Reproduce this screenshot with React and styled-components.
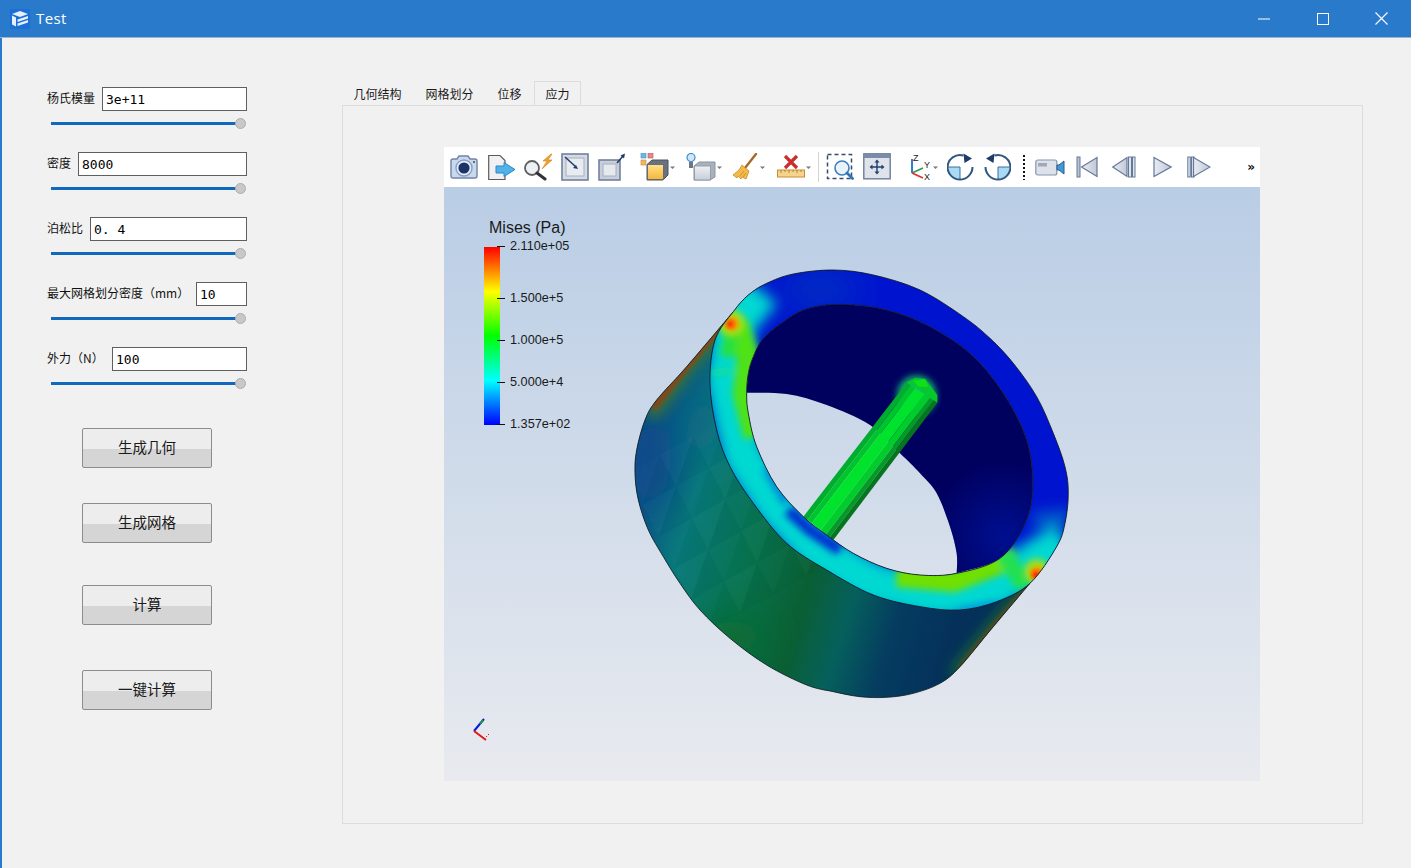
import React from "react";
import styled, { createGlobalStyle } from "styled-components";

const GlobalStyle = createGlobalStyle`
  html, body {
    margin: 0;
    padding: 0;
    background: #f1f1f1;
  }
  * {
    box-sizing: border-box;
  }
`;

const CJK = `"Noto Sans CJK SC", "Noto Sans", sans-serif`;

const Window = styled.div`
  width: 1411px;
  height: 868px;
  overflow: hidden;
  background: #f1f1f1;
  font-family: ${CJK};
`;

const TitleBar = styled.div`
  display: flex;
  align-items: center;
  height: 38px;
  padding-left: 10px;
  background: #2a7acc;
  border-bottom: 1px solid #9fb4c9;
  color: #fff;
`;

const TitleText = styled.span`
  margin: 0 0 2px 6px;
  font-family: "Open Sans", sans-serif;
  font-size: 15px;
  letter-spacing: 0.4px;
`;

const WindowButtons = styled.div`
  display: flex;
  margin-left: auto;
`;

const WindowButton = styled.div`
  display: flex;
  align-items: center;
  justify-content: center;
  width: 58.67px;
  height: 37px;
`;

const Body = styled.div`
  display: flex;
  height: 830px;
  padding: 43px 0 0 45px;
  border-left: 2px solid #2a7acc;
`;

const SidePanel = styled.div`
  width: 295px;
  padding-top: 6px;
  flex: none;
`;

const ParamGroup = styled.div`
  width: 200px;
  height: 65px;
`;

const ParamRow = styled.div`
  display: flex;
  align-items: center;
  justify-content: space-between;
  height: 24px;
`;

const ParamLabel = styled.label`
  padding-bottom: 2px;
  font-size: 12px;
  line-height: 22px;
  color: #111;
  white-space: pre;
`;

const ParamInput = styled.input`
  width: ${({ $width }) => $width}px;
  height: 24px;
  padding: 0 0 0 3px;
  background: #fff;
  border: 1px solid #5f5f5f;
  border-radius: 0;
  outline: none;
  font-family: "DejaVu Sans Mono", monospace;
  font-size: 13px;
  color: #000;
`;

const Slider = styled.div`
  position: relative;
  width: 189px;
  height: 3px;
  margin: 11px 0 0 4px;
  background: #1169bd;
`;

const SliderThumb = styled.div`
  position: absolute;
  top: -4px;
  right: -6px;
  width: 11px;
  height: 11px;
  border-radius: 50%;
  background: #c8c8c8;
  border: 1px solid #adadad;
`;

const ActionButton = styled.button`
  display: block;
  width: 130px;
  height: 40px;
  margin: ${({ $top }) => $top}px 0 0 35px;
  padding: 0 0 3px;
  background: linear-gradient(#ededed 52%, #d5d5d5 52%);
  border: 1px solid #8c8c8c;
  border-radius: 2px;
  font-family: ${CJK};
  font-size: 14.5px;
  color: #1a1a1a;
`;

const MainArea = styled.div`
  display: flex;
  flex-direction: column;
  width: 1021px;
`;

const TabBar = styled.div`
  display: flex;
  gap: 1px;
  height: 25px;
  margin-bottom: -1px;
`;

const Tab = styled.div`
  display: flex;
  align-items: center;
  justify-content: center;
  height: 25px;
  padding: 0 10.5px 1px;
  border: 1px solid ${({ $active }) => ($active ? "#dcdcdc" : "transparent")};
  border-bottom: none;
  font-size: 12px;
  color: #1a1a1a;
`;

const Pane = styled.div`
  height: 719px;
  padding: 41px 0 0 101px;
  border: 1px solid #dcdcdc;
`;

const Viewer = styled.div`
  display: flex;
  flex-direction: column;
  width: 816px;
  height: 634px;
`;

const Toolbar = styled.div`
  display: flex;
  align-items: center;
  flex: none;
  height: 40px;
  padding: 0 5px 0 6px;
  background: #fff;
`;

const Tool = styled.div`
  display: flex;
  flex: none;
  margin-left: ${({ $gap }) => $gap}px;

  svg {
    display: block;
  }
`;

const ToolDivider = styled.div`
  flex: none;
  width: 1px;
  height: 30px;
  margin: 0 7px 0 6px;
  background: #d4d4d4;
`;

const ToolDots = styled.div`
  flex: none;
  width: 2px;
  height: 25px;
  margin: 0 10px 0 12px;
  background: repeating-linear-gradient(#111 0 2px, transparent 2px 4px);
`;

const MoreLabel = styled.span`
  margin-left: auto;
  font-family: "DejaVu Sans", sans-serif;
  font-size: 12px;
  font-weight: 700;
  color: #111;
`;

const Canvas = styled.div`
  position: relative;
  flex: 1;
  background: linear-gradient(#b9cde5, #e8eaef);

  > svg {
    display: block;
  }
`;

const Legend = styled.div`
  position: absolute;
  top: 30px;
  left: 40px;
  font-family: "Liberation Sans", Arial, sans-serif;
  color: #1a1a1a;
`;

const LegendTitle = styled.div`
  margin-left: 5px;
  padding-top: 1px;
  font-size: 16px;
  line-height: 20px;
`;

const LegendScale = styled.div`
  display: flex;
  margin-top: 9px;
`;

const ColorBar = styled.div`
  width: 16px;
  height: 178px;
  background: linear-gradient(
    #ff0000 0%,
    #ffff00 25%,
    #00ff00 50%,
    #00ffff 75%,
    #0000ff 100%
  );
`;

const LegendTicks = styled.div`
  position: relative;
  width: 90px;
`;

const Tick = styled.div`
  position: absolute;
  top: ${({ $y }) => $y}px;
  left: -3px;
  display: flex;
  align-items: center;
  height: 14px;
  font-size: 12.7px;
  white-space: nowrap;

  &::before {
    content: "";
    width: 8px;
    height: 1px;
    margin-right: 5px;
    background: #111;
  }
`;

const Camera = () => (
  <svg width="28" height="28" viewBox="0 0 28 28">
    <path d="M1 8q0-2 2-2h4l2-3h9l2 3h5q2 0 2 2v15q0 2-2 2H3q-2 0-2-2z" fill="#c9d8ec" stroke="#6f84a8" strokeWidth="1.4" />
    <circle cx="14" cy="15" r="8" fill="#e8eef7" stroke="#86a0c6" strokeWidth="1.4" />
    <circle cx="14" cy="15" r="5.6" fill="#1c3368" />
    <circle cx="24" cy="9" r="1" fill="#445" />
  </svg>
);

const SaveData = () => (
  <svg width="28" height="28" viewBox="0 0 28 28">
    <path d="M0.7 2.5H12l5 5v19H0.7z" fill="#f1f1f3" stroke="#5a5a5f" strokeWidth="1.2" />
    <path d="M8 13h8V9.5l11 7-11 7V20H8z" fill="#4fb2e8" stroke="#2f86c4" strokeWidth="1" />
  </svg>
);

const RenderZoom = () => (
  <svg width="28" height="28" viewBox="0 0 28 28">
    <circle cx="8" cy="15" r="7" fill="#eef1f4" stroke="#5c5f63" strokeWidth="1.8" />
    <path d="M13 20l8 6" stroke="#333" strokeWidth="3" strokeLinecap="round" />
    <path d="M27 1l-8 7h4l-5 8 10-9h-4l4-6z" fill="#f0a030" stroke="#d9801a" strokeWidth="0.6" />
  </svg>
);

const BoxIn = () => (
  <svg width="28" height="28" viewBox="0 0 28 28">
    <rect x="1" y="1" width="26" height="26" fill="#d5dae3" stroke="#71839f" strokeWidth="1.6" />
    <rect x="5" y="5" width="18" height="18" fill="#e8ebef" stroke="#a6b0bf" strokeWidth="1" />
    <path d="M4 4l11 10" stroke="#1f3a6e" strokeWidth="1.5" />
    <path d="M17 16l-5-1 3-3z" fill="#1f3a6e" />
  </svg>
);

const BoxOut = () => (
  <svg width="28" height="28" viewBox="0 0 28 28">
    <rect x="1" y="7" width="21" height="20" fill="#c9ced8" stroke="#71839f" strokeWidth="1.6" />
    <rect x="5" y="11" width="13" height="12" fill="#e6e9ee" stroke="#a6b0bf" strokeWidth="1" />
    <path d="M19 10l6-7" stroke="#1f3a6e" strokeWidth="1.5" />
    <path d="M27 0.5l-1 5-3.500-3z" fill="#1f3a6e" />
  </svg>
);

const Caret = ({ x }) => <path d={`M${x} 13.500h5l-2.500 2.500z`} fill="#777" />;

const ColorCube = () => (
  <svg width="36" height="28" viewBox="0 0 36 28">
    <defs>
      <linearGradient id="cubeFront" x1="0" y1="0" x2="0" y2="1">
        <stop offset="0" stopColor="#ffe28a" />
        <stop offset="1" stopColor="#f7b53a" />
      </linearGradient>
    </defs>
    <rect x="1" y="0" width="5" height="5" fill="#6db6e8" stroke="#4a8dc0" strokeWidth="0.6" />
    <rect x="8" y="0" width="5" height="5" fill="#e08a8a" stroke="#b45a5a" strokeWidth="0.6" />
    <rect x="1" y="7" width="5" height="5" fill="#f3b562" stroke="#cc8a3a" strokeWidth="0.6" />
    <path d="M7 11.500l5-4.500h16v15l-5 5H7z" fill="#6a7280" stroke="#4a5260" strokeWidth="1" />
    <rect x="7.500" y="11.500" width="16" height="15" fill="url(#cubeFront)" stroke="#5a6270" strokeWidth="0.8" />
    <Caret x={30} />
  </svg>
);

const LightCube = () => (
  <svg width="37" height="28" viewBox="0 0 37 28">
    <defs>
      <linearGradient id="greyFront" x1="0" y1="0" x2="0" y2="1">
        <stop offset="0" stopColor="#eef1f4" />
        <stop offset="1" stopColor="#c6ced8" />
      </linearGradient>
    </defs>
    <path d="M8 13l5-4h16v15l-5 3H8z" fill="#a9b1bd" stroke="#8b94a1" strokeWidth="1" />
    <rect x="8.500" y="13" width="16" height="14" fill="url(#greyFront)" stroke="#8b94a1" strokeWidth="0.8" />
    <circle cx="5" cy="4.500" r="4" fill="#cfe7fa" stroke="#3f8ecb" strokeWidth="1.2" />
    <rect x="3" y="9" width="4" height="6" fill="#6d7685" />
    <Caret x={31} />
  </svg>
);

const Broom = () => (
  <svg width="35" height="28" viewBox="0 0 35 28">
    <path d="M24 1L13 15" stroke="#a8692b" strokeWidth="2.400" strokeLinecap="round" />
    <path d="M10 12l7 6-3 8-4-2-1 2-3-3-1 2-4-3 6-5z" fill="#f2b94b" stroke="#c98d24" strokeWidth="0.8" />
    <path d="M12 18l-4 5M14 20l-3 4" stroke="#c98d24" strokeWidth="0.8" />
    <Caret x={28} />
  </svg>
);

const ClearRuler = () => (
  <svg width="35" height="28" viewBox="0 0 35 28">
    <path d="M8 3l12 12M20 3L8 15" stroke="#c9302c" strokeWidth="3.200" />
    <rect x="0.500" y="17" width="27" height="7" fill="#f4d58a" stroke="#c98b3c" strokeWidth="1" />
    <path d="M4 17v3M8 17v2M12 17v3M16 17v2M20 17v3M24 17v2" stroke="#a9702c" strokeWidth="0.8" />
    <Caret x={29} />
  </svg>
);

const DashedZoom = () => (
  <svg width="28" height="28" viewBox="0 0 28 28">
    <rect x="1.500" y="1.500" width="24" height="24" fill="none" stroke="#36496e" strokeWidth="1.500" strokeDasharray="4 3" />
    <circle cx="16" cy="15" r="7" fill="#eaf2fa" stroke="#3f7fba" strokeWidth="1.600" />
    <path d="M21 20l5.500 5.500" stroke="#2c77b8" strokeWidth="2.800" strokeLinecap="round" />
  </svg>
);

const ResetCamera = () => (
  <svg width="28" height="28" viewBox="0 0 28 28">
    <rect x="0.800" y="0.800" width="26.400" height="25" fill="#dfe4ec" stroke="#6b7d99" strokeWidth="1.400" />
    <rect x="1" y="1" width="26" height="4" fill="#7c8ca8" />
    <path d="M14 8v12M8 14h12" stroke="#23406e" strokeWidth="1.400" />
    <path d="M14 6.500l-2.500 3h5zM14 21.500l-2.500-3h5zM6.500 14l3-2.500v5zM21.500 14l-3-2.500v5z" fill="#23406e" />
  </svg>
);

const Axes = () => (
  <svg width="32" height="28" viewBox="0 0 32 28">
    <path d="M4 20V6" stroke="#1f6fd0" strokeWidth="1.800" />
    <path d="M4 20l11-5" stroke="#2f9e4f" strokeWidth="1.800" />
    <path d="M4 20l11 5" stroke="#e03131" strokeWidth="1.800" />
    <text x="5" y="8" fontSize="9" fontFamily="Liberation Sans, sans-serif" fill="#222">Z</text>
    <text x="16" y="15" fontSize="9" fontFamily="Liberation Sans, sans-serif" fill="#222">Y</text>
    <text x="16" y="27" fontSize="9" fontFamily="Liberation Sans, sans-serif" fill="#222">X</text>
    <Caret x={25} />
  </svg>
);

const Rotate = ({ flip }) => (
  <svg width="27" height="28" viewBox="0 0 27 28">
    <g transform={flip ? "matrix(-1 0 0 1 27 0)" : undefined}>
      <path d="M13 14H1a12.500 12.500 0 0 0 12 12.500z" fill="#a9d9f3" />
      <path d="M1 14H13V26.500" fill="none" stroke="#3a6f9f" strokeWidth="1" />
      <path d="M25.500 14a12.500 12.500 0 0 1-25 0 12.500 12.500 0 0 1 16-11.500" fill="none" stroke="#33567f" strokeWidth="2" />
      <path d="M16.500 0.500L25 5.500 17.500 10z" fill="#1d3b6b" />
    </g>
  </svg>
);

const VideoCamera = () => (
  <svg width="30" height="28" viewBox="0 0 30 28">
    <rect x="0.800" y="7" width="21" height="15" rx="2" fill="#dde2ea" stroke="#8595ad" strokeWidth="1.200" />
    <rect x="3" y="10" width="9" height="3.500" fill="#9fa9b9" />
    <path d="M22 12h2l5-4v13l-5-4h-2z" fill="#3f9ad6" stroke="#2e5b8f" strokeWidth="1" />
  </svg>
);

const PlayerGradient = ({ id }) => (
  <defs>
    <linearGradient id={id} x1="0" y1="0" x2="1" y2="0">
      <stop offset="0" stopColor="#e8ecf3" />
      <stop offset="1" stopColor="#c2c9d5" />
    </linearGradient>
  </defs>
);

const FirstFrame = () => (
  <svg width="22" height="28" viewBox="0 0 22 28">
    <PlayerGradient id="firstGrad" />
    <rect x="1" y="4" width="3" height="20" fill="#bac3d1" stroke="#65789a" strokeWidth="1" />
    <path d="M5.500 14L21 4.500v19z" fill="url(#firstGrad)" stroke="#65789a" strokeWidth="1.200" />
  </svg>
);

const PrevFrame = () => (
  <svg width="24" height="28" viewBox="0 0 24 28">
    <PlayerGradient id="prevGrad" />
    <path d="M0.800 14L15 4.500v19z" fill="url(#prevGrad)" stroke="#65789a" strokeWidth="1.200" />
    <rect x="16.500" y="4" width="3" height="20" fill="#dfe4ec" stroke="#65789a" strokeWidth="1" />
    <rect x="20.500" y="4" width="2.500" height="20" fill="#dfe4ec" stroke="#65789a" strokeWidth="1" />
  </svg>
);

const PlayFrame = () => (
  <svg width="19" height="28" viewBox="0 0 19 28">
    <PlayerGradient id="playGrad" />
    <path d="M1 4.500L18 14 1 23.500z" fill="url(#playGrad)" stroke="#65789a" strokeWidth="1.200" />
  </svg>
);

const NextFrame = () => (
  <svg width="24" height="28" viewBox="0 0 24 28">
    <PlayerGradient id="nextGrad" />
    <rect x="0.800" y="4" width="2.500" height="20" fill="#dfe4ec" stroke="#65789a" strokeWidth="1" />
    <rect x="4.500" y="4" width="2.500" height="20" fill="#dfe4ec" stroke="#65789a" strokeWidth="1" />
    <path d="M6.500 4.500L23 14 6.500 23.500z" fill="url(#nextGrad)" stroke="#65789a" strokeWidth="1.200" />
  </svg>
);

// Catmull-Rom through the traced outline, so the ring edges stay round
const curve = (p, wrap) => {
  const n = p.length;
  const at = (i) => (wrap ? p[(i + n) % n] : p[Math.max(0, Math.min(n - 1, i))]);
  let d = "";
  const last = wrap ? n : n - 1;
  for (let i = 0; i < last; i++) {
    const [p0, p1, p2, p3] = [at(i - 1), at(i), at(i + 1), at(i + 2)];
    const c1x = p1[0] + (p2[0] - p0[0]) / 6;
    const c1y = p1[1] + (p2[1] - p0[1]) / 6;
    const c2x = p2[0] - (p3[0] - p1[0]) / 6;
    const c2y = p2[1] - (p3[1] - p1[1]) / 6;
    d += `C${c1x} ${c1y} ${c2x} ${c2y} ${p2[0]} ${p2[1]}`;
  }
  return d;
};
const closed = (p) => `M${p[0].join(" ")}${curve(p, true)}Z`;
const open = (p) => `M${p[0].join(" ")}${curve(p, false)}`;
const line = (list) => "M" + list.map((p) => p.join(" ")).join("L");

const OUTER = [
  [340, 155], [385, 105], [440, 70], [520, 42], [640, 30], [760, 45], [900, 90], [1030, 170], [1110, 235], [1180, 310],
  [1250, 410], [1300, 520], [1335, 620], [1345, 700], [1335, 790], [1310, 860], [1230, 970], [1130, 1025], [1020, 1050],
  [900, 1040], [760, 1005], [620, 930], [500, 850], [400, 730], [330, 620], [290, 510], [270, 370], [285, 240],
];

const HOLE = [
  [380, 398], [385, 340], [400, 290], [430, 235], [490, 185], [550, 150], [620, 135], [700, 135], [800, 150], [920, 195],
  [1050, 280], [1150, 400], [1220, 540], [1238, 680], [1215, 790], [1140, 895], [1010, 940], [900, 945], [800, 925],
  [700, 880], [620, 825], [550, 770], [470, 680], [410, 560], [385, 460],
];

const BACK_CUT = [
  [1010, 940], [1010, 880], [990, 800], [950, 700], [900, 640], [840, 580], [750, 495], [620, 435], [500, 402], [380, 398],
];

const WALL_EDGE = [
  [340, 155], [200, 320], [110, 420], [75, 480], [50, 570], [45, 640], [55, 720], [85, 810], [130, 890],
  [180, 970], [240, 1050], [330, 1135], [440, 1215], [560, 1275], [640, 1295], [720, 1310], [800, 1312], [880, 1300],
  [960, 1270], [1020, 1220], [1120, 1100], [1230, 970],
];

const WALL = `${open(WALL_EDGE)}L1100 1030L900 1040L600 900L400 730L290 510L270 370Z`;
const DARK_INSIDE = `M380 398${curve(HOLE.slice(0, 17), false)}${curve(BACK_CUT, false)}Z`;

// Mesh facets on the outer wall: alternating light and dark triangles on a skewed lattice
const FACETS = [];
for (let i = 0; i < 5; i++) {
  for (let j = 0; j < 5; j++) {
    const x = 20 + i * 100 + j * 48;
    const y = 640 - i * 56 + j * 95;
    const a = [x, y];
    const b = [x + 100, y - 56];
    const c = [x + 48, y + 95];
    const e = [x + 148, y + 39];
    FACETS.push({ d: line([a, b, c]) + "Z", fill: "#fff", o: (i + j) % 2 ? 0.024 : 0.01 });
    FACETS.push({ d: line([b, e, c]) + "Z", fill: "#000", o: (i + j) % 2 ? 0.028 : 0.015 });
  }
}

// Rod strips, from the lit edge to the shaded edge
const ROD_STRIPS = [
  { from: 0, to: 0.14, fill: "#00ad2e" },
  { from: 0.14, to: 0.28, fill: "#00c42e" },
  { from: 0.28, to: 0.58, fill: "#00e32c" },
  { from: 0.58, to: 0.76, fill: "#00cd2c" },
  { from: 0.76, to: 0.88, fill: "#049a28" },
  { from: 0.88, to: 1, fill: "#067520" },
];
const mix = (a, b, t) => [a[0] + (b[0] - a[0]) * t, a[1] + (b[1] - a[1]) * t];
const rodStrip = (from, to) => {
  const lowA = [550, 770];
  const lowB = [640, 840];
  const highA = [860, 368];
  const highB = [952, 428];
  return (
    line([mix(lowA, lowB, from), mix(highA, highB, from), mix(highA, highB, to), mix(lowA, lowB, to)]) + "Z"
  );
};

const RingModel = () => (
  <svg width="816" height="594" viewBox="0 0 816 594">
    <defs>
      <linearGradient id="wallShade" gradientUnits="userSpaceOnUse" x1="50" y1="700" x2="1050" y2="1000">
        <stop offset="0" stopColor="#0a4c88" />
        <stop offset="0.16" stopColor="#07787a" />
        <stop offset="0.36" stopColor="#07734f" />
        <stop offset="0.55" stopColor="#0a5f34" />
        <stop offset="0.68" stopColor="#05605c" />
        <stop offset="0.82" stopColor="#053c60" />
        <stop offset="1" stopColor="#04305a" />
      </linearGradient>
      <radialGradient id="insideGlow" gradientUnits="userSpaceOnUse" cx="1150" cy="830" r="230">
        <stop offset="0" stopColor="#000f90" />
        <stop offset="1" stopColor="#000f90" stopOpacity="0" />
      </radialGradient>
      <clipPath id="wallClip">
        <path d={WALL} />
      </clipPath>
      <clipPath id="ringClip">
        <path d={closed(OUTER) + closed(HOLE)} clipRule="evenodd" />
      </clipPath>
      <clipPath id="insideClip">
        <path d={DARK_INSIDE} />
      </clipPath>
      <filter id="blurWide" x="-150%" y="-150%" width="400%" height="400%">
        <feGaussianBlur stdDeviation="55" />
      </filter>
      <filter id="blurMid" x="-50%" y="-50%" width="200%" height="200%">
        <feGaussianBlur stdDeviation="20" />
      </filter>
      <filter id="blurSmall" x="-50%" y="-50%" width="200%" height="200%">
        <feGaussianBlur stdDeviation="11" />
      </filter>
      <filter id="blurTiny" x="-50%" y="-50%" width="200%" height="200%">
        <feGaussianBlur stdDeviation="6" />
      </filter>
    </defs>

    <g transform="translate(176 73) scale(0.33333)">
      <g clipPath="url(#wallClip)">
        <rect x="0" y="100" width="1300" height="1300" fill="url(#wallShade)" />
        <g filter="url(#blurWide)">
          <ellipse cx="90" cy="610" rx="60" ry="130" fill="#0a4c8c" />
          <ellipse cx="250" cy="500" rx="50" ry="90" fill="#086a86" />
          <ellipse cx="330" cy="1130" rx="110" ry="50" fill="#106a2c" />
        </g>
        <g filter="url(#blurMid)">
          <path d={line([[330, 170], [200, 320], [90, 470]])} fill="none" stroke="#3a7a30" strokeWidth="44" />
          <path d={line([[1230, 975], [1120, 1100], [1000, 1245]])} fill="none" stroke="#1f6a30" strokeWidth="34" />
        </g>
        <g filter="url(#blurTiny)">
          <path d={line([[330, 170], [200, 320], [100, 445]])} fill="none" stroke="#93400e" strokeWidth="18" />
          <path d={line([[1230, 975], [1120, 1100], [1020, 1225]])} fill="none" stroke="#7c3f0c" strokeWidth="10" />
        </g>
        {FACETS.map((f) => (
          <path key={f.d} d={f.d} fill={f.fill} opacity={f.o} />
        ))}
      </g>
      <path d={open(WALL_EDGE)} fill="none" stroke="#0c1c1c" strokeWidth="2.500" />

      <path d={DARK_INSIDE} fill="#00005f" />
      <g clipPath="url(#insideClip)">
        <circle cx="1150" cy="830" r="230" fill="url(#insideGlow)" />
        <circle cx="890" cy="405" r="58" fill="#14b870" filter="url(#blurSmall)" />
      </g>

      {ROD_STRIPS.map((s) => (
        <path key={s.fill} d={rodStrip(s.from, s.to)} fill={s.fill} />
      ))}
      <path d="M860 368L885 354 915 356 952 405 952 428 925 410 895 385z" fill="#06c82a" />
      <path d="M880 362L915 358 925 380 895 380z" fill="#10e01c" />

      <g clipPath="url(#ringClip)">
        <rect x="200" y="0" width="1200" height="1100" fill="#0014cf" />
        <ellipse cx="600" cy="90" rx="120" ry="50" fill="#0034c0" filter="url(#blurWide)" />
        <g filter="url(#blurMid)">
          <path
            d={line([[420, 90], [340, 190], [320, 370], [370, 590], [470, 740], [600, 880], [760, 970], [950, 1010], [1120, 985], [1340, 850]])}
            fill="none"
            stroke="#00d8d2"
            strokeWidth="130"
          />
          <path d={line([[1240, 780], [1350, 770]])} fill="none" stroke="#0060c8" strokeWidth="40" />
        </g>
        <g filter="url(#blurSmall)">
          <path d={line([[350, 190], [385, 290], [372, 400], [405, 530]])} fill="none" stroke="#50e212" strokeWidth="68" />
          <path d={line([[340, 200], [320, 290]])} fill="none" stroke="#28e040" strokeWidth="42" />
          <path d={line([[830, 950], [1000, 965], [1130, 915], [1190, 890]])} fill="none" stroke="#70e000" strokeWidth="62" />
          <path d={line([[1150, 880], [1215, 980]])} fill="none" stroke="#20e050" strokeWidth="52" />
          <path d={line([[275, 340], [340, 330]])} fill="none" stroke="#10dca0" strokeWidth="22" />
          <path d={line([[505, 750], [570, 810], [660, 870]])} fill="none" stroke="#0030d0" strokeWidth="36" />
          <path d={line([[440, 625], [500, 730]])} fill="none" stroke="#0090d8" strokeWidth="30" />
          <path d={line([[1020, 1052], [1130, 1028]])} fill="none" stroke="#0098e0" strokeWidth="14" />
        </g>
        <g filter="url(#blurSmall)">
          <circle cx="335" cy="190" r="40" fill="#a8e010" />
          <circle cx="1250" cy="935" r="38" fill="#a8e010" />
        </g>
        <circle cx="335" cy="192" r="20" fill="#ff8a00" filter="url(#blurTiny)" />
        <circle cx="1250" cy="940" r="20" fill="#ff8a00" filter="url(#blurTiny)" />
        <circle cx="330" cy="192" r="9" fill="#f01800" filter="url(#blurTiny)" />
        <circle cx="1248" cy="945" r="10" fill="#f01800" filter="url(#blurTiny)" />
      </g>
      <path d={closed(OUTER)} fill="none" stroke="#10141c" strokeWidth="2.500" />
      <path d={closed(HOLE)} fill="none" stroke="#10141c" strokeWidth="2.500" />
    </g>

    <g fill="none" strokeWidth="2">
      <path d="M30 544L40 532" stroke="#0a18d8" />
      <path d="M36 537L39 533" stroke="#169a3c" />
      <path d="M30 544L42 553" stroke="#e01818" />
    </g>
    <path d="M42 549h1v1h-1zM44 547h1v1h-1z" fill="#e01818" />
  </svg>
);

const FIELDS = [
  { label: "杨氏模量", value: "3e+11", width: 145 },
  { label: "密度", value: "8000", width: 169 },
  { label: "泊松比", value: "0. 4", width: 157 },
  { label: "最大网格划分密度（mm）", value: "10", width: 51 },
  { label: "外力（N）", value: "100", width: 135 },
];

const ACTIONS = [
  { label: "生成几何", top: 16 },
  { label: "生成网格", top: 35 },
  { label: "计算", top: 42 },
  { label: "一键计算", top: 45 },
];

const TABS = ["几何结构", "网格划分", "位移", "应力"];

export default function App() {
  return (
    <Window>
      <GlobalStyle />
      <TitleBar>
        <svg width="20" height="20" viewBox="0 0 20 20">
          <rect width="20" height="20" fill="#1b6fd6" />
          <path d="M2 5l8-3 8 3-8 3zM2 6.500l4 2v9l-4-2zM7.500 10.500L18 7v2.500L7.500 13zM7.500 14.500L18 11v2.500L7.500 17z" fill="#e6f0fb" />
        </svg>
        <TitleText>Test</TitleText>
        <WindowButtons>
          <WindowButton>
            <svg width="12" height="2" viewBox="0 0 12 2">
              <path d="M0 1H12" stroke="#fff" />
            </svg>
          </WindowButton>
          <WindowButton>
            <svg width="12" height="12" viewBox="0 0 12 12">
              <rect x="0.500" y="0.500" width="11" height="11" fill="none" stroke="#fff" />
            </svg>
          </WindowButton>
          <WindowButton>
            <svg width="13" height="13" viewBox="0 0 13 13">
              <path d="M0.500 0.500l12 12M12.500 0.500l-12 12" stroke="#fff" strokeWidth="1.100" />
            </svg>
          </WindowButton>
        </WindowButtons>
      </TitleBar>
      <Body>
        <SidePanel>
          {FIELDS.map((f) => (
            <ParamGroup key={f.label}>
              <ParamRow>
                <ParamLabel>{f.label}</ParamLabel>
                <ParamInput $width={f.width} defaultValue={f.value} />
              </ParamRow>
              <Slider>
                <SliderThumb />
              </Slider>
            </ParamGroup>
          ))}
          {ACTIONS.map((a) => (
            <ActionButton key={a.label} $top={a.top}>
              {a.label}
            </ActionButton>
          ))}
        </SidePanel>
        <MainArea>
          <TabBar>
            {TABS.map((t) => (
              <Tab key={t} $active={t === "应力"}>
                {t}
              </Tab>
            ))}
          </TabBar>
          <Pane>
            <Viewer>
              <Toolbar>
                <Tool $gap={0}><Camera /></Tool>
                <Tool $gap={10}><SaveData /></Tool>
                <Tool $gap={8}><RenderZoom /></Tool>
                <Tool $gap={9}><BoxIn /></Tool>
                <Tool $gap={9}><BoxOut /></Tool>
                <Tool $gap={14}><ColorCube /></Tool>
                <Tool $gap={10}><LightCube /></Tool>
                <Tool $gap={9}><Broom /></Tool>
                <Tool $gap={10}><ClearRuler /></Tool>
                <ToolDivider />
                <Tool $gap={0}><DashedZoom /></Tool>
                <Tool $gap={9}><ResetCamera /></Tool>
                <Tool $gap={17}><Axes /></Tool>
                <Tool $gap={7}><Rotate /></Tool>
                <Tool $gap={10}><Rotate flip /></Tool>
                <ToolDots />
                <Tool $gap={0}><VideoCamera /></Tool>
                <Tool $gap={11}><FirstFrame /></Tool>
                <Tool $gap={14}><PrevFrame /></Tool>
                <Tool $gap={17}><PlayFrame /></Tool>
                <Tool $gap={15}><NextFrame /></Tool>
                <MoreLabel>»</MoreLabel>
              </Toolbar>
              <Canvas>
                <RingModel />
                <Legend>
                  <LegendTitle>Mises (Pa)</LegendTitle>
                  <LegendScale>
                    <ColorBar />
                    <LegendTicks>
                      <Tick $y={-8}>2.110e+05</Tick>
                      <Tick $y={44}>1.500e+5</Tick>
                      <Tick $y={86}>1.000e+5</Tick>
                      <Tick $y={128}>5.000e+4</Tick>
                      <Tick $y={170}>1.357e+02</Tick>
                    </LegendTicks>
                  </LegendScale>
                </Legend>
              </Canvas>
            </Viewer>
          </Pane>
        </MainArea>
      </Body>
    </Window>
  );
}
